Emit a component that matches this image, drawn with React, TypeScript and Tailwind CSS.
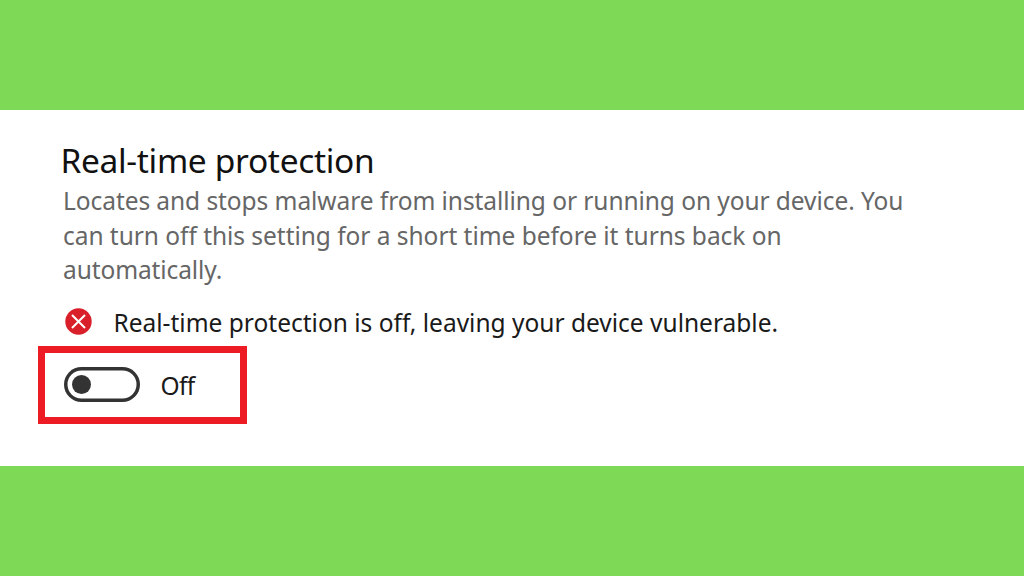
import React, { useState } from 'react';
import clsx from 'clsx';

const description = [
  { text: 'Locates and stops malware from installing or running on your device. You', tracking: 'tracking-[-0.07px]' },
  { text: 'can turn off this setting for a short time before it turns back on', tracking: 'tracking-[-0.04px]' },
  { text: 'automatically.', tracking: 'tracking-[-0.1px]' }
];

const ErrorIcon = () => (
  <svg viewBox="0 0 27 27" className="mb-[2px] h-[27px] w-[27px] shrink-0" fill="none">
    <circle cx="13.5" cy="13.5" r="13.2" fill="#d9202a" />
    <path d="M7 7l13 13M20 7L7 20" stroke="#fff" strokeWidth="2" />
  </svg>
);

const App = () => {
  const [enabled, setEnabled] = useState(false);

  return (
    <div className="flex h-screen flex-col justify-between bg-[#7ed957] font-['Noto_Sans','Open_Sans',sans-serif]">
      <main className="mt-[110px] h-[356px] bg-white pt-[29px] pl-[38px]">
        <h1 className="pl-[22.5px] text-[33.5px] leading-[42px] tracking-[-0.33px] whitespace-nowrap text-[#111]">
          <span>Real-time protection</span>
        </h1>

        <p className="mt-[3px] pl-[25px] text-[24.5px] leading-[34.5px] whitespace-nowrap text-[#666]">
          {description.map((line) => (
            <span key={line.text} className={clsx('block w-fit', line.tracking)}>
              {line.text}
            </span>
          ))}
        </p>

        <div className="mt-[16.5px] flex items-center gap-[21.5px] pl-[27px] leading-[34px]">
          <ErrorIcon />
          <span className="pt-[2px] block text-[24.5px] whitespace-nowrap text-[#1a1a1a]">
            Real-time protection is off, leaving your device vulnerable.
          </span>
        </div>

        <div className="mt-[5.5px] flex h-[78px] w-[209px] items-center border-[7px] border-[#ed1c24] pl-[18.5px]">
          <button
            type="button"
            role="switch"
            aria-checked={enabled}
            onClick={() => setEnabled(!enabled)}
            className={clsx(
              'flex h-[35px] w-[76.5px] items-center rounded-full px-[8.5px] shadow-[inset_0_0_0_3.5px_#333]',
              enabled && 'justify-end'
            )}
          >
            <span className="h-[18.5px] w-[18.5px] rounded-full bg-[#333]" />
          </button>
          <span className="ml-[20.5px] pt-[3px] text-[24.5px] leading-[34px] tracking-[-0.7px] text-[#1a1a1a]">
            {enabled ? 'On' : 'Off'}
          </span>
        </div>
      </main>
    </div>
  );
};

export default App;
